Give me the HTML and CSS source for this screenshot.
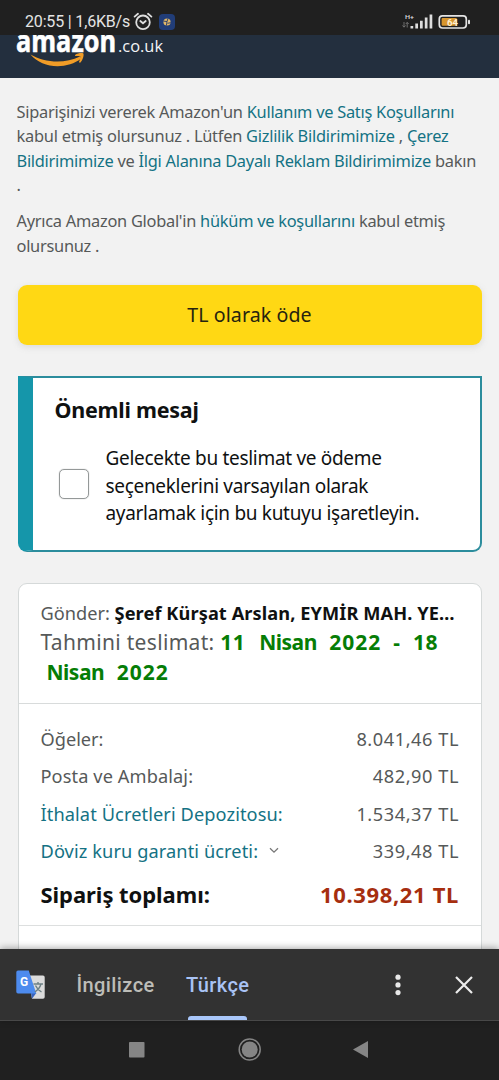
FILE: index.html
```html
<!DOCTYPE html>
<html lang="tr">
<head>
<meta charset="utf-8">
<title>Amazon.co.uk</title>
<link rel="stylesheet" href="styles.css">
</head>
<body>
<div class="status">
  <span class="clock">20:55 | 1,6KB/s</span>
  <svg class="alarm" width="20" height="20" viewBox="0 0 20 20" fill="none" stroke="#dedede" stroke-width="1.8" stroke-linecap="round"><circle cx="10" cy="10.3" r="6.8"/><path d="M1.600 4.600 5 1.800M18.400 4.600 15 1.800M7.300 9l2.700 2.300L12.700 9"/></svg>
  <svg class="app" width="16" height="16" viewBox="0 0 16 16"><rect width="16" height="16" rx="4" fill="#213d78"/><circle cx="8" cy="8" r="3.600" fill="#e0b768"/><path d="M4.200 7 8 7.600l1-3.200M8 7.600l-.6 4M8.500 9.300l3.300-.6" stroke="#344468" stroke-width="1" fill="none"/></svg>
  <svg class="signal" width="33" height="18" viewBox="0 0 33 18"><text x="4" y="5.800" class="tiny" textLength="9" lengthAdjust="spacingAndGlyphs">H+</text><path d="M3 9v5M1.500 12.500 3 14.200l1.500-1.700M6.200 14.500v-5M4.800 11 6.200 9.400 7.700 11" stroke="#777" stroke-width=".9" fill="none"/><path d="M9.500 15.500v-2.600h2.700v2.600zM14.300 15.500v-5h2.700v5zM19 15.500V7.700h2.700v7.800zM23.800 15.500V4.600h2.700v10.900zM28.600 15.500V1.500h2.700v14z" fill="#dedede"/></svg>
  <svg class="battery" width="33" height="16" viewBox="0 0 33 16"><rect x="1.300" y="1.800" width="27" height="12.200" rx="3.200" fill="none" stroke="#e4e4e4" stroke-width="1.700"/><rect x="3.600" y="4" width="15.300" height="7.800" rx="1" fill="#d8962e"/><rect x="30" y="5.800" width="2" height="4.400" rx="1" fill="#e4e4e4"/><text x="9" y="11.600" class="charge" textLength="11" lengthAdjust="spacingAndGlyphs">64</text></svg>
</div>
<header class="brand">
  <svg width="160" height="43" viewBox="0 0 160 43"><text x="0" y="17" class="logo" textLength="100" lengthAdjust="spacingAndGlyphs">amazon</text><text x="102" y="17.200" class="domain" textLength="45" lengthAdjust="spacingAndGlyphs">.co.uk</text><path d="M14.500 19.500C28 27.500 48 29.500 64 21.500L65.500 23.500C50 35 26 33.500 14.500 19.500Z" fill="#f09c27"/><path d="M59 20c3-2 7-2.300 8.400-1.400.6 1.800-.2 6-3.200 9.200l-1.300-.6c1.200-2.800 1.900-4.700 1.500-5.700-.6-.8-2.300-.7-5.200-.4z" fill="#f09c27"/></svg>
</header>
<main class="page">
  <p class="legal"><span class="s1">Siparişinizi vererek Amazon'un <a>Kullanım ve Satış Koşullarını</a></span><br><span class="s2">kabul etmiş olursunuz . Lütfen <a>Gizlilik Bildirimimize</a> , <a>Çerez</a></span><br><a>Bildirimimize</a> ve <a>İlgi Alanına Dayalı Reklam Bildirimimize</a> bakın<br>.</p>
  <p class="legal">Ayrıca Amazon Global'in <a>hüküm ve koşullarını</a> kabul etmiş<br>olursunuz .</p>
  <button class="pay">TL olarak öde</button>
  <section class="notice">
    <h2>Önemli mesaj</h2>
    <label class="choice"><span class="box"></span><span>Gelecekte bu teslimat ve ödeme<br>seçeneklerini varsayılan olarak<br>ayarlamak için bu kutuyu işaretleyin.</span></label>
  </section>
  <section class="card">
    <div class="ship">
      <div class="to">Gönder: <b>Şeref Kürşat Arslan, EYMİR MAH. YE…</b></div>
      <div class="eta">Tahmini teslimat: <b><span class="d">11</span><span class="m">Nisan</span><span class="y">2022</span><span class="dash">-</span><span class="d">18</span><br><span class="m first">Nisan</span><span class="y">2022</span></b></div>
    </div>
    <div class="costs">
      <div class="row"><span>Öğeler:</span><span class="num">8.041,46 TL</span></div>
      <div class="row"><span class="s3">Posta ve Ambalaj:</span><span class="num">482,90 TL</span></div>
      <div class="row"><a class="s3">İthalat Ücretleri Depozitosu:</a><span class="num">1.534,37 TL</span></div>
      <div class="row"><a class="s3">Döviz kuru garanti ücreti: <svg class="chev" width="10" height="7" viewBox="0 0 10 7"><path d="M1 1.200 5 5.200 9 1.200" fill="none" stroke="#777" stroke-width="1.300"/></svg></a><span class="num">339,48 TL</span></div>
      <div class="row total"><span>Sipariş toplamı:</span><span class="num">10.398,21 TL</span></div>
    </div>
  </section>
</main>
<footer class="translate">
  <svg class="gt" width="30" height="30" viewBox="0 0 30 30"><path d="M12 5.500h15a1.700 1.700 0 0 1 1.700 1.700v19.800a1.700 1.700 0 0 1-1.700 1.700H16z" fill="#dcdcdc"/><path d="M15 23h5.300L16 28.700z" fill="#3763bd"/><path d="M2 .5h10.800l1.500 5 6 18H2A1.700 1.700 0 0 1 .3 21.800V2.200A1.700 1.700 0 0 1 2 .5z" fill="#4d8bee"/><path d="M17.500 14h9.500M22 12v2M25 14c-1 3.500-3.500 6.200-6.200 8M19.500 15.500c1.300 2.800 3.300 5 6 6.500" fill="none" stroke="#6d8084" stroke-width="1.400"/><text x="3.900" y="15.900" class="g">G</text></svg>
  <span class="lang">İngilizce</span>
  <span class="lang on">Türkçe</span>
  <svg class="dots" width="8" height="22" viewBox="0 0 8 22" fill="#e8e8e8"><circle cx="4" cy="3.200" r="2.600"/><circle cx="4" cy="10.900" r="2.600"/><circle cx="4" cy="18.600" r="2.600"/></svg>
  <svg class="close" width="20" height="20" viewBox="0 0 20 20"><path d="M2 2l16 16M18 2 2 18" stroke="#ececec" stroke-width="2.200"/></svg>
</footer>
<nav class="system">
  <svg width="499" height="58" viewBox="0 0 499 58" fill="#858585"><rect x="129" y="21" width="15.500" height="15.500" rx=".8"/><circle cx="249.700" cy="28.500" r="8"/><circle cx="249.700" cy="28.500" r="10.500" fill="none" stroke="#858585" stroke-width="1.500"/><path d="M353 28.500 368 20v17z"/></svg>
</nav>
</body>
</html>
```
FILE: styles.css
```css
* { box-sizing: border-box; }
body {
  margin: 0;
  width: 499px;
  height: 1080px;
  overflow: hidden;
  display: flex;
  flex-direction: column;
  background: #f2f2f2;
  font-family: "Noto Sans", sans-serif;
  color: #0f1111;
}
svg { display: block; flex: none; }
a { color: #147284; }
.status {
  flex: none;
  height: 35px;
  padding: 8px 28px 0 25px;
  display: flex;
  align-items: center;
  background: #202020;
  font-family: Roboto, sans-serif;
}
.clock { width: 108px; font-size: 16px; letter-spacing: -.17px; color: #e4e4e4; white-space: nowrap; }
.app { margin-left: 6px; }
.signal { margin-left: auto; }
.battery { margin-left: 4px; }
.tiny { font: 500 6px Roboto, sans-serif; fill: #ddd; }
.charge { font: 700 9.5px Roboto, sans-serif; fill: #fff0d0; }
.brand { flex: none; height: 43px; padding-left: 16px; background: #232f3e; overflow: hidden; }
.brand svg { overflow: hidden; }
.logo { font: 700 31px "Open Sans", sans-serif; fill: #fff; stroke: #fff; stroke-width: .6px; }
.domain { font: 400 16px "Open Sans", sans-serif; fill: #f2f4f6; }
.page { flex: 1; min-height: 0; overflow: hidden; padding: 22px 17.500px 0; }
.legal {
  margin: 0 -6px 11.500px -1px;
  font-size: 16.400px;
  line-height: 24.400px;
  letter-spacing: -.27px;
  color: #565959;
  white-space: nowrap;
}
.s1 { letter-spacing: -.265px; }
.s2 { letter-spacing: -.25px; }
.pay {
  display: block;
  width: 100%;
  height: 60px;
  margin: 27px 0 31px;
  padding: 0;
  border: 0;
  border-radius: 9px;
  background: #ffd814;
  box-shadow: 0 2px 6px rgba(150, 150, 150, .25);
  font: 19.600px "Noto Sans", sans-serif;
  letter-spacing: .08px;
  color: #26230f;
}
.notice {
  height: 176px;
  border: 2px solid #2c8d9d;
  border-left: 15px solid #1596aa;
  border-radius: 0 0 9px 9px;
  background: #fff;
  padding: 16px 0 0 22px;
}
h2 { margin: 0; font-size: 21.500px; line-height: 32px; letter-spacing: -.25px; }
.choice {
  display: flex;
  align-items: center;
  gap: 16.500px;
  margin-top: 19px;
  padding-left: 4.500px;
  font-size: 19px;
  line-height: 27.600px;
  letter-spacing: -.31px;
  white-space: nowrap;
}
.box { width: 30px; height: 30px; border: 1.500px solid #949898; border-radius: 5px; margin-bottom: 4px; box-shadow: 0 0 1px #949898; }
.card {
  margin-top: 31px;
  height: 400px;
  border: 1px solid #d5d9d9;
  border-radius: 9px 9px 0 0;
  background: #fff;
}
.ship {
  height: 120px;
  padding: 16px 22px 0;
  border-bottom: 1px solid #d8dbdb;
  color: #565959;
  white-space: nowrap;
}
.to { font-size: 18.200px; line-height: 27px; letter-spacing: 0; }
.to b { color: #0f1111; letter-spacing: .09px; }
.eta { font-size: 21px; line-height: 30px; letter-spacing: .32px; }
.eta b { color: #067d06; letter-spacing: 0; }
.eta span { display: inline-block; }
.eta .d { letter-spacing: .4px; }
.eta .m { margin: 0 12.500px 0 14px; letter-spacing: -.5px; }
.eta .first { margin-left: 6px; }
.eta .y { letter-spacing: 1px; }
.eta .dash { margin: 0 13px 0 12px; }
.costs { height: 222px; padding: 17px 22px 0; border-bottom: 1px solid #dddfdf; }
.row {
  display: flex;
  justify-content: space-between;
  font-size: 18.200px;
  line-height: 37.400px;
  color: #565959;
  white-space: nowrap;
}
.s3 { letter-spacing: .1px; }
.num { letter-spacing: .55px; }
.row:not(.total) .num { margin-right: -.5px; }
.chev { display: inline-block; margin: 0 0 4px 6px; vertical-align: baseline; }
.total { margin-top: 3px; line-height: 40px; font-size: 22px; font-weight: 700; color: #0f1111; letter-spacing: -.05px; }
.total .num { color: #a62e0f; margin-right: -.5px; letter-spacing: .65px; }
.translate {
  position: relative;
  flex: none;
  height: 72px;
  display: flex;
  align-items: center;
  padding-left: 16px;
  background: #323232;
  border-bottom: 1px solid #484848;
  box-shadow: 0 -1px 7px rgba(0, 0, 0, .35);
  font: 500 20px/30px Roboto, sans-serif;
}
.g { font: 700 12px Roboto, sans-serif; fill: #fff; }
.lang { position: relative; height: 71px; line-height: 73px; margin-left: 30.500px; width: 79px; letter-spacing: .4px; color: #bdbdb8; }
.on { margin-left: 30.500px; width: 64px; color: #a9c3f5; }
.on::after {
  content: "";
  position: absolute;
  left: 2px;
  bottom: 0;
  width: 59px;
  height: 4px;
  border-radius: 3px 3px 0 0;
  background: #a9c7fa;
}
.dots { margin-left: 143.500px; }
.close { margin-left: 52.500px; }
.system { flex: none; height: 59px; background: #202020; }
```
